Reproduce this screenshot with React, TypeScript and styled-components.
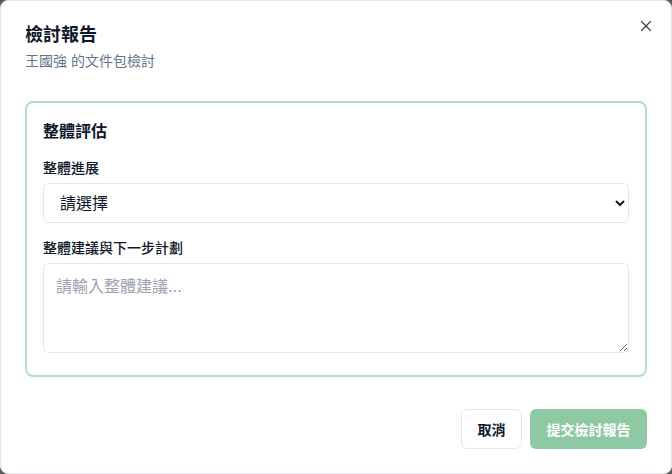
import styled, { createGlobalStyle } from "styled-components";
import { X } from "lucide-react";

const GlobalStyle = createGlobalStyle`
  * { box-sizing: border-box; }
  html, body {
    margin: 0;
    padding: 0;
    background: #5b5b5b;
  }
  body {
    font-family: "Inter", "Noto Sans CJK TC", "Noto Sans", sans-serif;
    color: #0f172a;
  }
`;

export default function App() {
  return (
    <>
      <GlobalStyle />
      <Dialog>
        <CloseButton aria-label="close">
          <X size={18} strokeWidth={1.6} />
        </CloseButton>
        <Header>
          <Title>檢討報告</Title>
          <Subtitle>王國強 的文件包檢討</Subtitle>
        </Header>
        <Card>
          <CardTitle>整體評估</CardTitle>
          <Field>
            <Label>整體進展</Label>
            <Select defaultValue="">
              <option value="">請選擇</option>
              <option value="good">良好</option>
              <option value="ok">普通</option>
              <option value="bad">需改進</option>
            </Select>
          </Field>
          <Field>
            <Label>整體建議與下一步計劃</Label>
            <TextArea placeholder="請輸入整體建議..." />
          </Field>
        </Card>
        <Footer>
          <Button>取消</Button>
          <Button $primary disabled>
            提交檢討報告
          </Button>
        </Footer>
      </Dialog>
    </>
  );
}

const Dialog = styled.div`
  position: relative;
  display: flex;
  flex-direction: column;
  width: 672px;
  height: 474px;
  padding: 20px 24px 24px;
  background: #fff;
  border: 1px solid #e2e8f0;
  border-radius: 8px;
`;

const CloseButton = styled.button`
  position: absolute;
  top: 16px;
  right: 16px;
  display: flex;
  align-items: center;
  justify-content: center;
  width: 18px;
  height: 18px;
  padding: 0;
  border: none;
  background: transparent;
  color: #3f4652;
  cursor: pointer;
`;

const Header = styled.div`
  display: flex;
  flex-direction: column;
  gap: 6px;
`;

const Title = styled.h2`
  margin: 0;
  font-size: 18px;
  line-height: 28px;
  font-weight: 600;
  color: #0f172a;
`;

const Subtitle = styled.p`
  margin: 0;
  margin-top: -4px;
  font-size: 14px;
  line-height: 20px;
  color: #64748b;
`;

const Card = styled.div`
  display: flex;
  flex-direction: column;
  margin-top: 30px;
  padding: 18px 16px 22px;
  border: 2px solid #b6dcc3;
  border-radius: 8px;
`;

const CardTitle = styled.h3`
  margin: 0 0 17px;
  font-size: 16px;
  line-height: 20px;
  font-weight: 600;
`;

const Field = styled.div`
  display: flex;
  flex-direction: column;
  gap: 5px;
  & + & {
    margin-top: 15px;
  }
`;

const Label = styled.label`
  font-size: 14px;
  line-height: 20px;
  font-weight: 500;
  color: #0f172a;
`;

const Select = styled.select`
  height: 40px;
  padding: 0 8px 0 12px;
  font-family: inherit;
  font-size: 16px;
  color: #0f172a;
  background: #fff;
  border: 1px solid #e2e8f0;
  border-radius: 6px;
  outline: none;
`;

const TextArea = styled.textarea`
  height: 90px;
  padding: 10px 12px;
  font-family: inherit;
  font-size: 16px;
  line-height: 24px;
  color: #0f172a;
  border: 1px solid #e2e8f0;
  border-radius: 6px;
  outline: none;
  resize: vertical;
  &::placeholder {
    color: #9ca3af;
  }
`;

const Footer = styled.div`
  display: flex;
  justify-content: flex-end;
  gap: 8px;
  margin-top: auto;
`;

const Button = styled.button<{ $primary?: boolean }>`
  height: 40px;
  padding: 0 15.5px;
  font-family: inherit;
  font-size: 14px;
  font-weight: 600;
  border-radius: 6px;
  border: 1px solid ${({ $primary }) => ($primary ? "transparent" : "#e2e8f0")};
  background: ${({ $primary }) => ($primary ? "#8fc9a3" : "#fff")};
  color: ${({ $primary }) => ($primary ? "#fff" : "#0f172a")};
  cursor: pointer;
  &:disabled {
    cursor: not-allowed;
  }
`;
